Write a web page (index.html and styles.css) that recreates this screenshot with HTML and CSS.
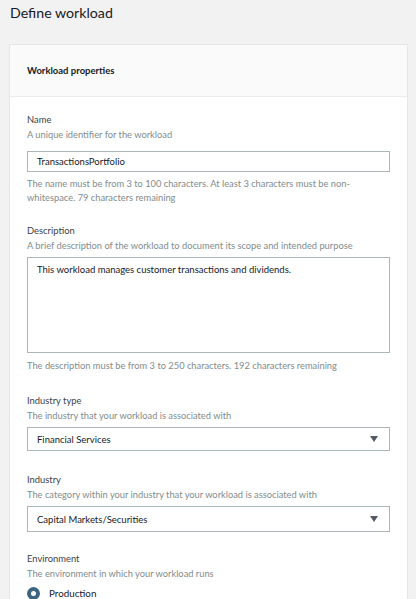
FILE: index.html
```html
<!DOCTYPE html>
<html lang="en">
<head>
<meta charset="utf-8">
<title>Define workload</title>
<link rel="stylesheet" href="styles.css">
</head>
<body>
<h1 class="page-title">Define workload</h1>
<section class="card">
  <header class="card-header">Workload properties</header>
  <div class="card-body">
    <div class="field">
      <div class="label">Name</div>
      <div class="hint">A unique identifier for the workload</div>
      <div class="input input-name">TransactionsPortfolio</div>
      <div class="help">The name must be from 3 to 100 characters. At least 3 characters must be non-whitespace. 79 characters remaining</div>
    </div>
    <div class="field field-desc">
      <div class="label">Description</div>
      <div class="hint">A brief description of the workload to document its scope and intended purpose</div>
      <div class="textarea">This workload manages customer transactions and dividends.</div>
      <div class="help help-desc">The description must be from 3 to 250 characters. 192 characters remaining</div>
    </div>
    <div class="field field-select">
      <div class="label">Industry type</div>
      <div class="hint">The industry that your workload is associated with</div>
      <div class="select"><span>Financial Services</span><span class="caret"></span></div>
    </div>
    <div class="field field-select field-last-select">
      <div class="label">Industry</div>
      <div class="hint">The category within your industry that your workload is associated with</div>
      <div class="select select-tall"><span>Capital Markets/Securities</span><span class="caret"></span></div>
    </div>
    <div class="field">
      <div class="label">Environment</div>
      <div class="hint">The environment in which your workload runs</div>
      <div class="radio-row"><span class="radio"></span><span>Production</span></div>
    </div>
  </div>
</section>
</body>
</html>
```

FILE: styles.css
```css
html, body {
  margin: 0;
  padding: 0;
}
body {
  background: #f2f2f2;
  font-family: "Lato", "Liberation Sans", sans-serif;
  color: #16191f;
  width: 416px;
  height: 599px;
  overflow: hidden;
}
.page-title {
  margin: 0;
  padding: 3px 0 0 10px;
  font-size: 14.2px;
  font-weight: 400;
  line-height: 20px;
  color: #16191f;
}
.card {
  margin: 21px 8px 0 9px;
  background: #fff;
  border: 1px solid #e4e7e7;
  border-bottom: none;
  box-shadow: 0 1px 1px rgba(0, 0, 0, 0.04);
}
.card-header {
  height: 51px;
  background: #fafafa;
  border-bottom: 1px solid #eaeded;
  padding-left: 17px;
  display: flex;
  align-items: center;
  font-size: 9.5px;
  font-weight: 700;
  color: #16191f;
}
.card-body {
  padding: 15px 17px 0 17px;
}
.field {
  margin-bottom: 18px;
}
.field-desc {
  margin-bottom: 20px;
}
.field-select {
  margin-bottom: 21px;
}
.field-last-select {
  margin-bottom: 19px;
}
.label {
  font-size: 9.4px;
  line-height: 15px;
  color: #3b4249;
}
.hint {
  font-size: 9.3px;
  line-height: 15px;
  color: #7f8c8d;
}
.input, .textarea, .select {
  box-sizing: border-box;
  border: 1px solid #aab7b8;
  background: #fff;
  font-size: 9.5px;
  color: #16191f;
  padding: 0 9px;
}
.input {
  margin-top: 9px;
  height: 21px;
  display: flex;
  align-items: center;
}
.textarea {
  margin-top: 4px;
  height: 96px;
  padding-top: 4px;
  line-height: 15px;
}
.select {
  margin-top: 4px;
  height: 24px;
  display: flex;
  align-items: center;
  justify-content: space-between;
  padding-right: 11px;
}
.select-tall {
  height: 26px;
}
.caret {
  width: 0;
  height: 0;
  border-left: 4.5px solid transparent;
  border-right: 4.5px solid transparent;
  border-top: 6px solid #545b64;
}
.help {
  margin-top: 5px;
  font-size: 9.3px;
  line-height: 14px;
  color: #7f8c8d;
}
.help-desc {
  margin-top: 6px;
}
.radio-row {
  margin-top: 5px;
  display: flex;
  align-items: center;
  gap: 9px;
  font-size: 9.8px;
  line-height: 14px;
  color: #16191f;
}
.radio {
  box-sizing: border-box;
  width: 13px;
  height: 13px;
  border-radius: 50%;
  border: 4px solid #3e6580;
  background: #fff;
}
```
